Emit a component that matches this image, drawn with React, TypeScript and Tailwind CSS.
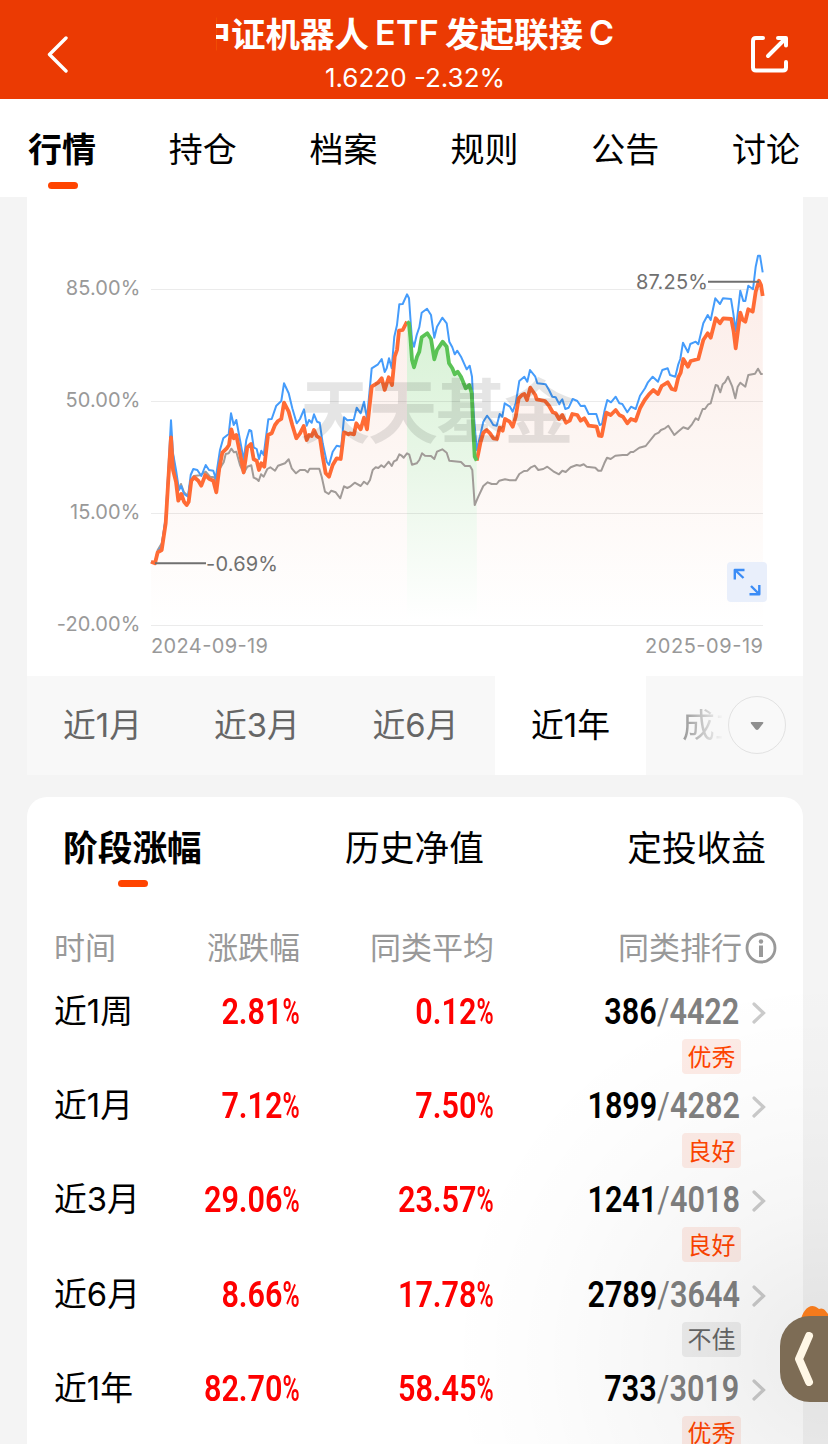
import React from 'react';
import clsx from 'clsx';

interface Chunk {
  x: number;
  pts: string;
}

interface RankRow {
  period: string;
  change: string;
  average: string;
  rank: string;
  total: string;
  level: string;
}

const navTabs = ['行情', '持仓', '档案', '规则', '公告', '讨论'];
const detailTabs = ['阶段涨幅', '历史净值', '定投收益'];

const periods = [
  { label: '近1月', width: 'w-[151px]' },
  { label: '近3月', width: 'w-[158px]' },
  { label: '近6月', width: 'w-[159px]' },
  { label: '近1年', width: 'w-[151px]', active: true },
];

const rows: RankRow[] = [
  { period: '近1周', change: '2.81', average: '0.12', rank: '386', total: '4422', level: '优秀' },
  { period: '近1月', change: '7.12', average: '7.50', rank: '1899', total: '4282', level: '良好' },
  { period: '近3月', change: '29.06', average: '23.57', rank: '1241', total: '4018', level: '良好' },
  { period: '近6月', change: '8.66', average: '17.78', rank: '2789', total: '3644', level: '不佳' },
  { period: '近1年', change: '82.70', average: '58.45', rank: '733', total: '3019', level: '优秀' },
];

// Each series is stored in chunks at three units per pixel, x being the chunk's left edge.
const fundStart: Chunk[] = [
  { x: 140, pts: '33,965 45,970 53,937 65,930 77,850 85,720 93,592 99,690 108,725 115,782 124,762 132,785 140,795 146,785 154,722 163,712 175,722 184,737 196,705 207,716 220,722 229,757 238,685 247,638 260,625 267,615 274,568 281,595 289,585 300,640 311,697 322,622 333,612 341,658 350,662 357,690 364,670 373,680 384,585 395,580 405,555 414,543 424,537 432,488 446,515 457,555 469,595 480,580 491,558 500,600 507,585 515,588 522,570 530,588 540,595 548,650 557,700 567,710 578,675 590,655 602,657 612,577 625,583' },
  { x: 350, pts: '0,580 12,583 19,550 32,568 42,533 51,568 65,440 84,428 95,415 104,450 116,412 126,435 134,350 141,330 147,272 158,270 171,245' },
];
const fundDrawdown: Chunk[] = [
  { x: 350, pts: '171,245 177,250 181,290 186,360 192,382 201,350 208,335 215,292 232,280 243,297 253,358 261,330 278,305 290,320 297,370 307,385 314,403 323,395 333,410 347,445 358,435 365,460 370,570 374,650 380,662' },
];
const fundEnd: Chunk[] = [
  { x: 350, pts: '380,662 385,640 391,610 400,578 410,570 420,580 430,595 441,597 449,563 458,572 465,537 479,545 488,560 497,530 506,475 516,465 523,462 531,480 541,443 556,465 560,478 585,483 597,497 608,517 617,520 627,537 637,525 648,548' },
  { x: 560, pts: '29,542 37,522 52,525 62,542 73,535 86,557 110,560 117,587 125,588 139,518 152,525 167,510 178,525 189,530 202,550 213,537 227,542 240,505 254,480 267,463 280,450 294,462 305,438 323,427 335,447 346,450 355,412 362,398 370,357 384,380 392,363 415,357 430,300 443,280 452,293 467,235 480,250 490,235 514,237 521,275 527,325 541,218 548,240 556,245 565,208 578,215 587,155 597,122 603,135 608,168' },
];
const benchmark: Chunk[] = [
  { x: 140, pts: '33,965 45,968 53,935 65,920 77,830 85,690 93,541 99,640 108,690 117,750 124,738 132,762 144,770 152,705 160,687 172,690 184,708 197,675 207,690 220,692 227,715 240,630 250,595 266,582 273,520 281,555 289,540 300,600 311,660 319,600 328,570 334,573 341,622 350,627 357,657 364,632 371,645 385,538 395,537 409,497 424,483 432,430 446,460 457,505 470,550 480,537 492,508 500,557 507,540 515,548 522,523 531,545 539,548 548,610 560,665 567,675 578,635 590,617 604,620 612,532 622,541' },
  { x: 350, pts: '0,540 11,540 20,503 32,520 42,485 51,535 65,385 84,373 95,357 104,396 110,385 117,355 125,385 133,290 141,255 148,193 158,192 171,163 177,175 181,230 186,300 192,320 200,285 208,262 215,218 231,206 243,225 253,293 261,260 277,233 290,250 298,305 307,322 314,343 322,332 333,350 350,388 359,377 366,410 371,520 380,630 390,590 400,545 411,527 421,540 430,555 440,557 449,522 457,530 464,490 480,500 488,515 497,490 508,423 523,410 532,425 540,390 556,410 562,430 587,433 597,450 607,470 617,472 628,493' },
  { x: 560, pts: '0,487 7,478 16,507 26,503 38,477 52,483 62,498 74,497 86,522 109,522 119,555 126,552 134,510 142,480 153,487 167,470 178,490 187,492 202,517 213,500 227,507 240,467 255,445 263,428 278,410 294,425 307,390 323,385 330,405 346,410 355,373 361,357 369,308 384,337 391,312 407,305 415,313 430,250 443,225 452,240 466,175 480,192 489,175 513,177 520,220 527,273 541,152 550,183 556,183 565,137 579,148 587,80 594,47 600,47 608,97' },
];
const peers: Chunk[] = [
  { x: 140, pts: '33,965 45,968 53,930 65,910 77,840 85,700 93,600 105,690 115,750 123,732 132,757 144,768 152,722 161,708 180,706 197,695 210,710 222,712 229,725 240,685 251,667 257,642 266,640 274,626 282,637 289,635 300,675 311,700 322,680 334,676 341,713 350,717 356,723 363,703 371,710 382,687 391,682 405,692 414,677 435,670 446,658 455,685 468,700 480,690 495,690 503,697 509,686 538,686 545,710 555,755 566,762 574,752 587,757 601,775 612,739 622,744' },
  { x: 350, pts: '0,740 14,728 32,738 42,725 52,733 60,720 68,690 77,682 85,684 94,676 102,682 116,665 125,678 132,664 140,660 148,643 155,647 161,653 171,640 178,644 186,674 200,670 208,660 216,640 225,647 243,648 253,657 261,635 277,628 290,638 298,662 333,666 345,678 360,678 367,690 374,795 385,770 400,738 413,727 425,732 440,732 448,722 465,718 480,721 497,721 508,702 522,693 532,692 543,682 554,677 565,690 580,687 592,680 610,694 627,703' },
  { x: 560, pts: '7,692 17,696 32,682 50,675 60,677 71,673 80,680 106,683 115,692 124,692 133,670 141,653 152,657 166,647 188,645 202,645 212,636 220,636 238,623 257,618 285,583 296,578 303,570 315,565 325,557 343,585 354,575 370,562 384,567 396,553 407,535 415,540 428,507 435,507 445,493 452,490 467,435 473,437 481,457 488,433 495,427 504,410 517,440 526,475 533,440 541,428 556,440 565,405 585,401 594,386 603,402 608,402' },
];

const toPoints = (chunks: Chunk[]) =>
  chunks
    .flatMap(({ x, pts }) =>
      pts.split(' ').map((p) => {
        const [px, py] = p.split(',').map(Number);
        return `${(x + px / 3).toFixed(1)},${(240 + py / 3).toFixed(1)}`;
      }),
    )
    .join(' ');

const gridLines = [
  { y: 289.5, label: '85.00%' },
  { y: 401.5, label: '50.00%' },
  { y: 513.5, label: '15.00%' },
  { y: 625.5, label: '-20.00%' },
];

function Chart() {
  const start = toPoints(fundStart);
  const drawdown = toPoints(fundDrawdown);
  const end = toPoints(fundEnd);

  return (
    <svg viewBox="27 197 776 479" className="block h-[479px] w-[776px]" fill="none" strokeLinejoin="round">
      <defs>
        <linearGradient id="fundFill" gradientUnits="userSpaceOnUse" x1="0" y1="280" x2="0" y2="625">
          <stop offset="0" stopColor="#fcede9" />
          <stop offset="0.5" stopColor="#fdf6f3" />
          <stop offset="1" stopColor="#fff" />
        </linearGradient>
        <linearGradient id="drawdownFill" gradientUnits="userSpaceOnUse" x1="0" y1="322" x2="0" y2="620">
          <stop offset="0" stopColor="#d8f2d6" />
          <stop offset="0.5" stopColor="#e9f7e8" />
          <stop offset="1" stopColor="#fff" />
        </linearGradient>
      </defs>

      <polygon points={`151,625 ${start} ${drawdown} ${end} 763,625`} fill="url(#fundFill)" />
      <polygon points={`407,622 ${drawdown} 477,622`} fill="url(#drawdownFill)" />

      {gridLines.map(({ y, label }) => (
        <g key={label}>
          <path d={`M151 ${y}H763`} stroke="#000" strokeOpacity="0.08" />
          <text x="140.5" y={y + 5} textAnchor="end" className="fill-[#999] font-['Inter'] text-[20px] tracking-[0.1px]">
            {label}
          </text>
        </g>
      ))}

      <polyline points={toPoints(peers)} stroke="#a19b98" strokeWidth="2" />
      <polyline points={toPoints(benchmark)} stroke="#459cfb" strokeWidth="2" />
      <polyline points={start} stroke="#ff6b35" strokeWidth="3.8" />
      <polyline points={end} stroke="#ff6b35" strokeWidth="3.8" />
      <polyline points={drawdown} stroke="#5ac355" strokeWidth="3.8" />

      <text
        x="300"
        y="438"
        textLength="274"
        className="fill-black/10 font-['Noto_Sans_CJK_SC',sans-serif] text-[70px] font-bold"
      >
        天天基金
      </text>

      <path d="M155 563.3H206M708 281.8H759" stroke="#707070" strokeWidth="2" />
      <text x="206" y="570.5" className="fill-[#707070] font-['Inter'] text-[20px] tracking-[0.2px]">
        -0.69%
      </text>
      <text x="636" y="289" className="fill-[#707070] font-['Inter'] text-[20px] tracking-[0.2px]">
        87.25%
      </text>

      <text x="151" y="653" textLength="117" className="fill-[#999] font-['Inter'] text-[20px]">
        2024-09-19
      </text>
      <text x="645" y="653" textLength="118" className="fill-[#999] font-['Inter'] text-[20px]">
        2025-09-19
      </text>

      <rect x="727" y="562" width="40" height="40" rx="4" fill="#e9effb" />
      <path
        d="M744.5 570H734.8V579.5M735 570L743.5 578M751 586L759 594M759.3 585V594.3H749.5"
        stroke="#3b8cf6"
        strokeWidth="2.4"
      />
    </svg>
  );
}

function Header() {
  return (
    <header className="flex h-[99px] items-center justify-between bg-[#eb3a03] pr-10 pl-[46px] text-white">
      <svg viewBox="0 0 22 38" className="mt-[9px] mr-[12px] h-[38px] w-[22px]" fill="none" stroke="currentColor" strokeWidth="3.4" strokeLinecap="round" strokeLinejoin="round">
        <path d="M20 3L3.5 19.5L20 36" />
      </svg>
      <div className="flex flex-col items-center">
        <h1 className="mt-[10px] flex h-[50px] w-[398px] items-center justify-end overflow-hidden text-[34.5px] font-bold whitespace-nowrap">
          <span>中证机器人</span>
          <span className="mx-1.5 font-['Inter'] text-[34px] font-semibold tracking-[0.3px]">ETF</span>
          <span>发起联接</span>
          <span className="ml-1.5 font-['Inter'] text-[34px] font-semibold">C</span>
        </h1>
        <p className="mb-1 h-10 font-['Inter'] text-[26px] leading-10">1.6220 -2.32%</p>
      </div>
      <svg viewBox="0 0 38 38" className="mt-[9px] h-[38px] w-[38px]" fill="none" stroke="currentColor" strokeWidth="4" strokeLinecap="round" strokeLinejoin="round">
        <path d="M13 3H6Q3 3 3 6V32.5Q3 35.5 6 35.5H33Q36 35.5 36 32.5V27" />
        <path d="M18 21L35 4M28 3H36V10.5" />
      </svg>
    </header>
  );
}

function Indicator() {
  return <span className="ml-0.5 block h-[7px] w-[30px] rounded-full bg-[#ff4400]" />;
}

function Percent({ value }: { value: string }) {
  return (
    <span className="origin-right scale-x-[0.85] text-[#fe0000]">
      {value}
      <span className="-ml-[6px] inline-block origin-right scale-x-[0.76]">%</span>
    </span>
  );
}

function RankLine({ row }: { row: RankRow }) {
  const poor = row.level === '不佳';

  return (
    <li className="grid h-[94.2px] grid-cols-[101px_145px_194px_246px_1fr] text-right font-['Roboto'] text-[36px] leading-[57px] font-semibold">
      <span className="text-left font-['Inter','Noto_Sans_CJK_SC',sans-serif] text-[32.8px] leading-[54px] font-normal text-black">{row.period}</span>
      <Percent value={row.change} />
      <Percent value={row.average} />
      <div className="flex flex-col items-end">
        <span className="-mr-px h-[55px] origin-right translate-x-[-1.5px] scale-x-[0.85] text-black">
          {row.rank}
          <span className="text-[#808080]">
            <span className="font-normal">/</span>
            {row.total}
          </span>
        </span>
        <span
          className={clsx(
            "-mr-px flex h-[35px] w-[59px] items-center justify-center rounded-[4px] pb-0.5 font-['Noto_Sans_CJK_SC',sans-serif] text-2xl font-normal",
            poor ? 'bg-[#eeeeee] text-[#666]' : 'bg-[#fdebe6] text-[#ff4400]',
          )}
        >
          {row.level}
        </span>
      </div>
      <svg viewBox="0 0 14 22" className="mt-[18px] ml-[12px] h-[22px] w-[14px]" fill="none" stroke="#cbcbcb" strokeWidth="3.2" strokeLinecap="round">
        <path d="M2 2L11.5 11L2 20" />
      </svg>
    </li>
  );
}

export default function App() {
  return (
    <div className="relative h-[1444px] w-[828px] overflow-hidden bg-[#f4f4f4] font-['Noto_Sans_CJK_SC',sans-serif] text-black">
      <Header />

      <nav className="flex h-[98px] justify-between bg-white px-[28px] pt-[24px] text-[34px] leading-[50px]">
        {navTabs.map((tab, i) => (
          <div key={tab} className={clsx('flex flex-col items-center gap-[9px]', i === 0 && 'font-bold')}>
            {tab}
            {i === 0 && <Indicator />}
          </div>
        ))}
      </nav>

      <section className="mx-[27px] w-[776px] bg-white">
        <Chart />
        <div className="flex h-[99px] bg-[#f8f8f8] font-['Inter','Noto_Sans_CJK_SC',sans-serif] text-[32.8px] text-[#666]">
          {periods.map(({ label, width, active }) => (
            <div key={label} className={clsx('flex items-center justify-center', width, active && 'bg-white text-black')}>
              {label}
            </div>
          ))}
          <div className="flex flex-1 items-center justify-between pr-[17px] pl-[36px]">
            <span className="w-[40px] overflow-hidden bg-gradient-to-r from-[#999] to-[#f4f4f4] bg-clip-text whitespace-nowrap text-transparent">
              成立
            </span>
            <div className="-mt-0.5 flex h-[58px] w-[58px] items-center justify-center rounded-full border-[1.5px] border-[#e2e2e2] bg-[#f9f9f9]">
              <svg viewBox="0 0 14 10" className="mt-0.5 h-[10px] w-[14px]" fill="#8f8f8f">
                <path d="M1.5 1H12.5Q14 1 13 2.6L8.5 8.2Q7 9.6 5.5 8.2L1 2.6Q0 1 1.5 1Z" />
              </svg>
            </div>
          </div>
        </div>
      </section>

      <section className="mx-[27px] mt-[22px] h-[700px] w-[776px] rounded-t-[20px] bg-white">
        <div className="flex h-[105px] justify-between pr-[37px] pl-[36px] pt-[24px] text-[34.7px] leading-[50px]">
          {detailTabs.map((tab, i) => (
            <div key={tab} className={clsx('flex flex-col items-center gap-[9px]', i === 0 && 'font-bold')}>
              {tab}
              {i === 0 && <Indicator />}
            </div>
          ))}
        </div>
        <div className="grid h-[82px] grid-cols-[101px_145px_194px_248px_1fr] items-center pt-[6px] pl-[27px] text-right text-[31px] text-[#999]">
          <span className="text-left">时间</span>
          <span>涨跌幅</span>
          <span>同类平均</span>
          <span>同类排行</span>
          <svg viewBox="0 0 32 32" className="mt-[3px] ml-[3px] h-8 w-8" fill="none" stroke="#999" strokeWidth="2.8">
            <circle cx="16" cy="16" r="14" />
            <path d="M16 13.5V25" strokeWidth="4" />
            <circle cx="16" cy="9.5" r="2.2" fill="#999" stroke="none" />
          </svg>
        </div>
        <ul className="pl-[27px]">
          {rows.map((row) => (
            <RankLine key={row.period} row={row} />
          ))}
        </ul>
      </section>

      {/* Floating drawer handle with its soft shadow */}
      <div className="pointer-events-none absolute right-0 bottom-0 h-[480px] w-[400px] bg-[radial-gradient(circle_380px_at_100%_82%,rgba(0,0,0,0.08),rgba(0,0,0,0.035)_40%,rgba(0,0,0,0.01)_75%,transparent)]" />
      <div className="absolute top-[1305px] right-0 h-[97px] w-[48px]">
        <svg viewBox="0 0 48 97" className="absolute inset-0" fill="#f47a1c">
          <path d="M20 18C23 3 31 -3 39 4C43 2 46 6 48 9V24H20Z" />
        </svg>
        <div className="absolute right-0 bottom-0 flex h-[86px] w-[48px] items-center justify-center rounded-l-[30px] bg-[#7d6c55]">
          <svg viewBox="0 0 20 54" className="h-[54px] w-[20px]" fill="none" stroke="#fff7e6" strokeWidth="8" strokeLinecap="round" strokeLinejoin="round">
            <path d="M15 4L5 27L15 50" />
          </svg>
        </div>
      </div>
    </div>
  );
}
